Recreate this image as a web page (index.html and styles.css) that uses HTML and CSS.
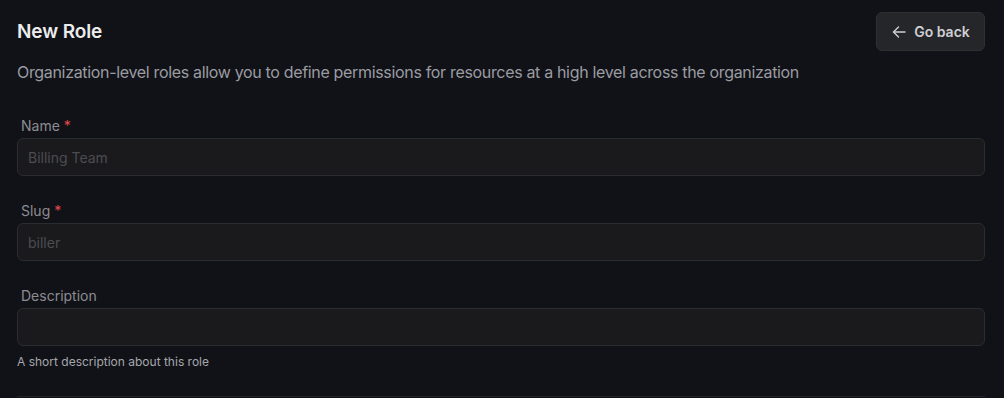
FILE: index.html
```html
<!DOCTYPE html>
<html lang="en">
<head>
  <meta charset="UTF-8">
  <title>New Role</title>
  <link rel="stylesheet" href="styles.css">
</head>
<body>
  <div class="page">
    <div class="header">
      <h1 class="title">New Role</h1>
      <button class="back-button" type="button">
        <svg class="back-icon" viewBox="0 0 16 16" width="16" height="16" fill="none" stroke="currentColor" stroke-width="1.4" stroke-linecap="round" stroke-linejoin="round">
          <path d="M14 8H2.5"/>
          <path d="M7.5 3L2.5 8l5 5"/>
        </svg>
        Go back
      </button>
    </div>
    <p class="intro">Organization-level roles allow you to define permissions for resources at a high level across the organization</p>

    <form class="role-form">
      <div class="field">
        <label class="field-label" for="name">Name <span class="required">*</span></label>
        <input class="field-input" id="name" type="text" placeholder="Billing Team">
      </div>
      <div class="field">
        <label class="field-label" for="slug">Slug <span class="required">*</span></label>
        <input class="field-input" id="slug" type="text" placeholder="biller">
      </div>
      <div class="field">
        <label class="field-label" for="description">Description</label>
        <input class="field-input" id="description" type="text">
        <div class="field-help">A short description about this role</div>
      </div>
    </form>
    <div class="divider"></div>
  </div>
</body>
</html>
```

FILE: styles.css
```css
html, body {
  margin: 0;
  background-color: #111217;
  font-family: 'Inter', 'Noto Sans', sans-serif;
  color: #e6e6e8;
}
.page {
  padding: 12px 19px 0 17px;
}
.header {
  display: flex;
  align-items: center;
  justify-content: space-between;
  height: 39px;
}
.title {
  margin: 0;
  font-size: 19px;
  font-weight: 600;
  color: #ececee;
  letter-spacing: -0.1px;
}
.back-button {
  display: flex;
  align-items: center;
  gap: 7px;
  height: 39px;
  width: 109px;
  justify-content: center;
  padding: 0 14px;
  background-color: #25262a;
  border: 1px solid #2e2f33;
  border-radius: 6px;
  color: #cfcfd3;
  font-family: inherit;
  font-size: 14px;
  font-weight: 600;
  cursor: pointer;
}
.back-icon {
  flex-shrink: 0;
}
.intro {
  margin: 9px 0 0;
  font-size: 16px;
  line-height: 24px;
  letter-spacing: -0.33px;
  color: #9b9ca2;
}
.role-form {
  margin-top: 32px;
  display: flex;
  flex-direction: column;
  gap: 25px;
}
.field {
  display: flex;
  flex-direction: column;
}
.field-label {
  padding-left: 4px;
  margin-bottom: 2px;
  font-size: 14px;
  line-height: 20px;
  color: #8c8c92;
}
.required {
  color: #e5484d;
}
.field-input {
  box-sizing: border-box;
  height: 38px;
  padding: 0 10px;
  background-color: #1a1a1d;
  border: 1px solid #2b2c30;
  border-radius: 6px;
  color: #e6e6e8;
  font-family: inherit;
  font-size: 14px;
  outline: none;
}
.field-input::placeholder {
  color: #4b4c51;
}
.field-help {
  margin-top: 8px;
  font-size: 12px;
  line-height: 16px;
  color: #a6a7ac;
}
.divider {
  margin-top: 26px;
  border-top: 1px solid #222327;
}
```
